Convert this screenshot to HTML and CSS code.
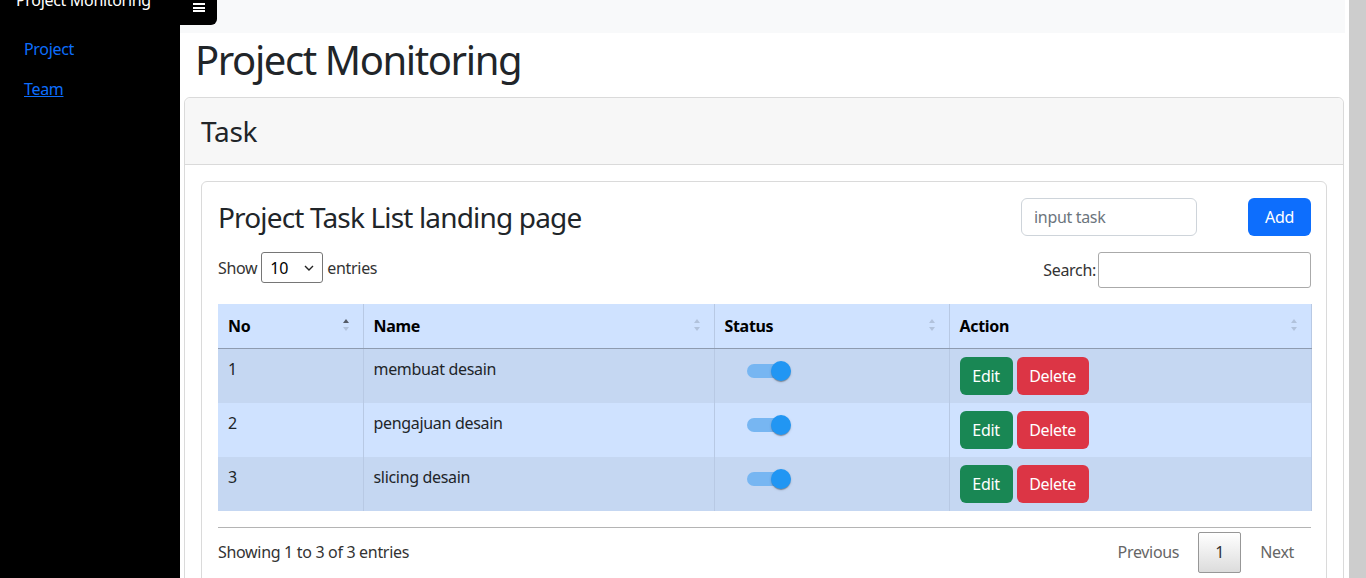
FILE: index.html
```html
<!DOCTYPE html>
<html lang="id">
<head>
<meta charset="utf-8">
<title>Project Monitoring</title>
<link rel="stylesheet" href="styles.css">
</head>
<body>
<div class="layout">
  <aside class="sidebar">
    <div class="brand">Project Monitoring</div>
    <ul class="side-nav">
      <li><a class="side-link" href="#">Project</a></li>
      <li><a class="side-link underline" href="#">Team</a></li>
    </ul>
  </aside>
  <main class="main">
    <nav class="topbar">
      <button class="toggle" type="button" aria-label="Toggle">
        <span class="bars"><span></span><span></span><span></span></span>
      </button>
    </nav>
    <h1 class="page-title">Project Monitoring</h1>
    <section class="card">
      <div class="card-header"><h3 class="card-title">Task</h3></div>
      <div class="card-body">
        <div class="inner-card">
          <div class="title-row">
            <h3 class="list-title">Project Task List landing page</h3>
            <input class="task-input" type="text" placeholder="input task">
            <button class="btn btn-primary" type="button">Add</button>
          </div>
          <div class="dt-top">
            <label class="dt-length">Show
              <span class="select">10<svg class="chev" width="10" height="6" viewBox="0 0 10 6"><path d="M1 1l4 4 4-4" fill="none" stroke="#222" stroke-width="1.4"/></svg></span>
              entries</label>
            <label class="dt-search">Search:<span class="search-box"></span></label>
          </div>
          <table class="dt">
            <thead>
              <tr>
                <th class="c-no">No<span class="sort asc"><i class="up"></i><i class="down"></i></span></th>
                <th class="c-name">Name<span class="sort"><i class="up"></i><i class="down"></i></span></th>
                <th class="c-status">Status<span class="sort"><i class="up"></i><i class="down"></i></span></th>
                <th class="c-action">Action<span class="sort"><i class="up"></i><i class="down"></i></span></th>
              </tr>
            </thead>
            <tbody>
              <tr class="odd">
                <td>1</td><td>membuat desain</td>
                <td><span class="switch"><span class="track"></span><span class="thumb"></span></span></td>
                <td><button class="btn btn-success" type="button">Edit</button><button class="btn btn-danger" type="button">Delete</button></td>
              </tr>
              <tr class="even">
                <td>2</td><td>pengajuan desain</td>
                <td><span class="switch"><span class="track"></span><span class="thumb"></span></span></td>
                <td><button class="btn btn-success" type="button">Edit</button><button class="btn btn-danger" type="button">Delete</button></td>
              </tr>
              <tr class="odd">
                <td>3</td><td>slicing desain</td>
                <td><span class="switch"><span class="track"></span><span class="thumb"></span></span></td>
                <td><button class="btn btn-success" type="button">Edit</button><button class="btn btn-danger" type="button">Delete</button></td>
              </tr>
            </tbody>
          </table>
          <div class="dt-bottom">
            <div class="dt-info">Showing 1 to 3 of 3 entries</div>
            <div class="dt-paginate">
              <span class="pg-btn disabled">Previous</span>
              <span class="pg-btn current">1</span>
              <span class="pg-btn disabled">Next</span>
            </div>
          </div>
        </div>
      </div>
    </section>
  </main>
  <div class="scroll-gap"></div>
  <div class="scrollbar"></div>
</div>
</body>
</html>
```

FILE: styles.css
```css
* { box-sizing: border-box; }
html, body { margin: 0; padding: 0; }
body {
  font-family: "Noto Sans", "Open Sans", sans-serif;
  font-size: 16px;
  line-height: 24px;
  letter-spacing: -0.02em;
  color: #212529;
  background: #fff;
  height: 578px;
  overflow: hidden;
}
.layout { display: flex; height: 578px; }

.sidebar { width: 180px; flex: none; background: #000; }
.brand { color: #fff; font-size: 16px; line-height: 24px; padding-left: 16px; margin-top: -12px; }
.side-nav { list-style: none; margin: 0; padding: 25px 0 0 24px; }
.side-nav li { height: 40px; }
.side-link { color: #0d6efd; text-decoration: none; font-size: 16px; line-height: 24px; }
.side-link.underline { text-decoration: underline; }

.main { width: 1165px; flex: none; display: flex; flex-direction: column; padding: 0 1px 0 4px; }
.main > * { flex-shrink: 0; }
.topbar { height: 33px; background: #f8f9fa; margin: 0 -1px 0 -4px; display: flex; align-items: flex-start; }
.toggle { width: 37px; height: 25px; background: #000; border: 0; border-bottom-right-radius: 6px; padding: 0; display: flex; justify-content: center; padding-top: 3px; }
.bars { display: flex; flex-direction: column; gap: 1.5px; width: 12px; }
.bars span { display: block; height: 2px; background: #fff; }

.page-title { font-size: 40px; line-height: 48px; font-weight: 400; margin: 3px 0 13px 11px; color: #212529; letter-spacing: -0.035em; }

.card { border: 1px solid #dadada; border-radius: 6px; }
.card-header { background: #f7f7f7; border-bottom: 1px solid #dadada; padding: 16px; border-radius: 6px 6px 0 0; }
.card-title { margin: 0; font-size: 28px; line-height: 34px; font-weight: 400; }
.card-body { padding: 16px; }
.inner-card { border: 1px solid #dadada; border-radius: 6px; padding: 16px 15px 16px 16px; }

.title-row { display: flex; align-items: center; height: 38px; }
.list-title { flex: 1; margin: 0; font-size: 28px; line-height: 34px; font-weight: 400; letter-spacing: -0.03em; }
.task-input { width: 176px; height: 38px; border: 1px solid #ced4da; border-radius: 6px; padding: 6px 12px; font: inherit; letter-spacing: inherit; color: #212529; margin-right: 51px; }
.task-input::placeholder { color: #6c757d; }

.btn { height: 38px; border: 0; border-radius: 6px; font: inherit; letter-spacing: inherit; color: #fff; padding: 0 12px; line-height: 38px; }
.btn-primary { background: #0d6efd; width: 63px; }
.btn-success { background: #198754; width: 53px; }
.btn-danger { background: #dc3545; width: 72px; margin-left: 4px; }

.dt-top { display: flex; justify-content: space-between; align-items: flex-start; margin-top: 16px; height: 36px; }
.dt-length { display: flex; align-items: center; gap: 4px; height: 31px; color: #333; }
.select { width: 62px; height: 31px; border: 1px solid #767676; border-radius: 3px; display: flex; align-items: center; justify-content: space-between; padding: 0 8px 0 8px; color: #000; }
.dt-search { display: flex; align-items: center; gap: 2px; height: 36px; color: #333; }
.search-box { width: 213px; height: 36px; border: 1px solid #aaa; border-radius: 3px; }

.dt { width: 1093px; border-collapse: collapse; margin-top: 16px; table-layout: fixed; }
.dt th, .dt td { text-align: left; vertical-align: top; border-left: 1px solid #b8c9e4; }
.dt th:first-child, .dt td:first-child { border-left: 0; }
.dt th:last-child, .dt td:last-child { border-right: 1px solid #b8c9e4; }
.dt th { background: #cfe2ff; font-weight: 700; color: #000; padding: 10px 10px; height: 44px; position: relative; border-bottom: 1px solid #8e9bb0; }
.c-no { width: 145px; }
.c-name { width: 351px; }
.c-status { width: 235px; }
.c-action { width: 362px; }
.dt td { padding: 8px 10px; height: 54px; color: #212529; }
.dt tr.odd td { background: #c5d7f2; }
.dt tr.even td { background: #cfe2ff; }

.sort { position: absolute; right: 13px; top: 15px; width: 7px; height: 14px; }
.sort i { position: absolute; left: 0; width: 0; height: 0; border-left: 3.5px solid transparent; border-right: 3.5px solid transparent; opacity: .14; }
.sort .up { top: 0; border-bottom: 4px solid #000; }
.sort .down { top: 8px; border-top: 4px solid #000; }
.sort.asc .up { opacity: .6; }

.switch { display: block; position: relative; width: 60px; height: 30px; margin-left: 22px; }
.track { position: absolute; left: 0; top: 7px; width: 36px; height: 14px; border-radius: 7px; background: #77b6f2; }
.thumb { position: absolute; left: 24px; top: 4px; width: 20px; height: 20px; border-radius: 50%; background: #2196f3; box-shadow: 0 2px 1px -1px rgba(0,0,0,.2), 0 1px 1px 0 rgba(0,0,0,.14), 0 1px 3px 0 rgba(0,0,0,.12); }

.dt-bottom { margin-top: 16px; border-top: 1px solid #b4b4b4; display: flex; justify-content: space-between; align-items: flex-start; }
.dt-info { padding-top: 12px; color: #333; }
.dt-paginate { display: flex; padding-top: 4px; }
.pg-btn { height: 41px; padding: 0 16px; line-height: 39px; border: 1px solid transparent; border-radius: 2px; margin-left: 2px; color: #666; }
.pg-btn.current { color: #333; border-color: #979797; background: linear-gradient(to bottom, #fff 0%, #dcdcdc 100%); width: 43px; padding: 0; text-align: center; }

.scroll-gap { width: 4px; flex: none; }
.scrollbar { width: 17px; flex: none; background: #cdcdcd; }
```
